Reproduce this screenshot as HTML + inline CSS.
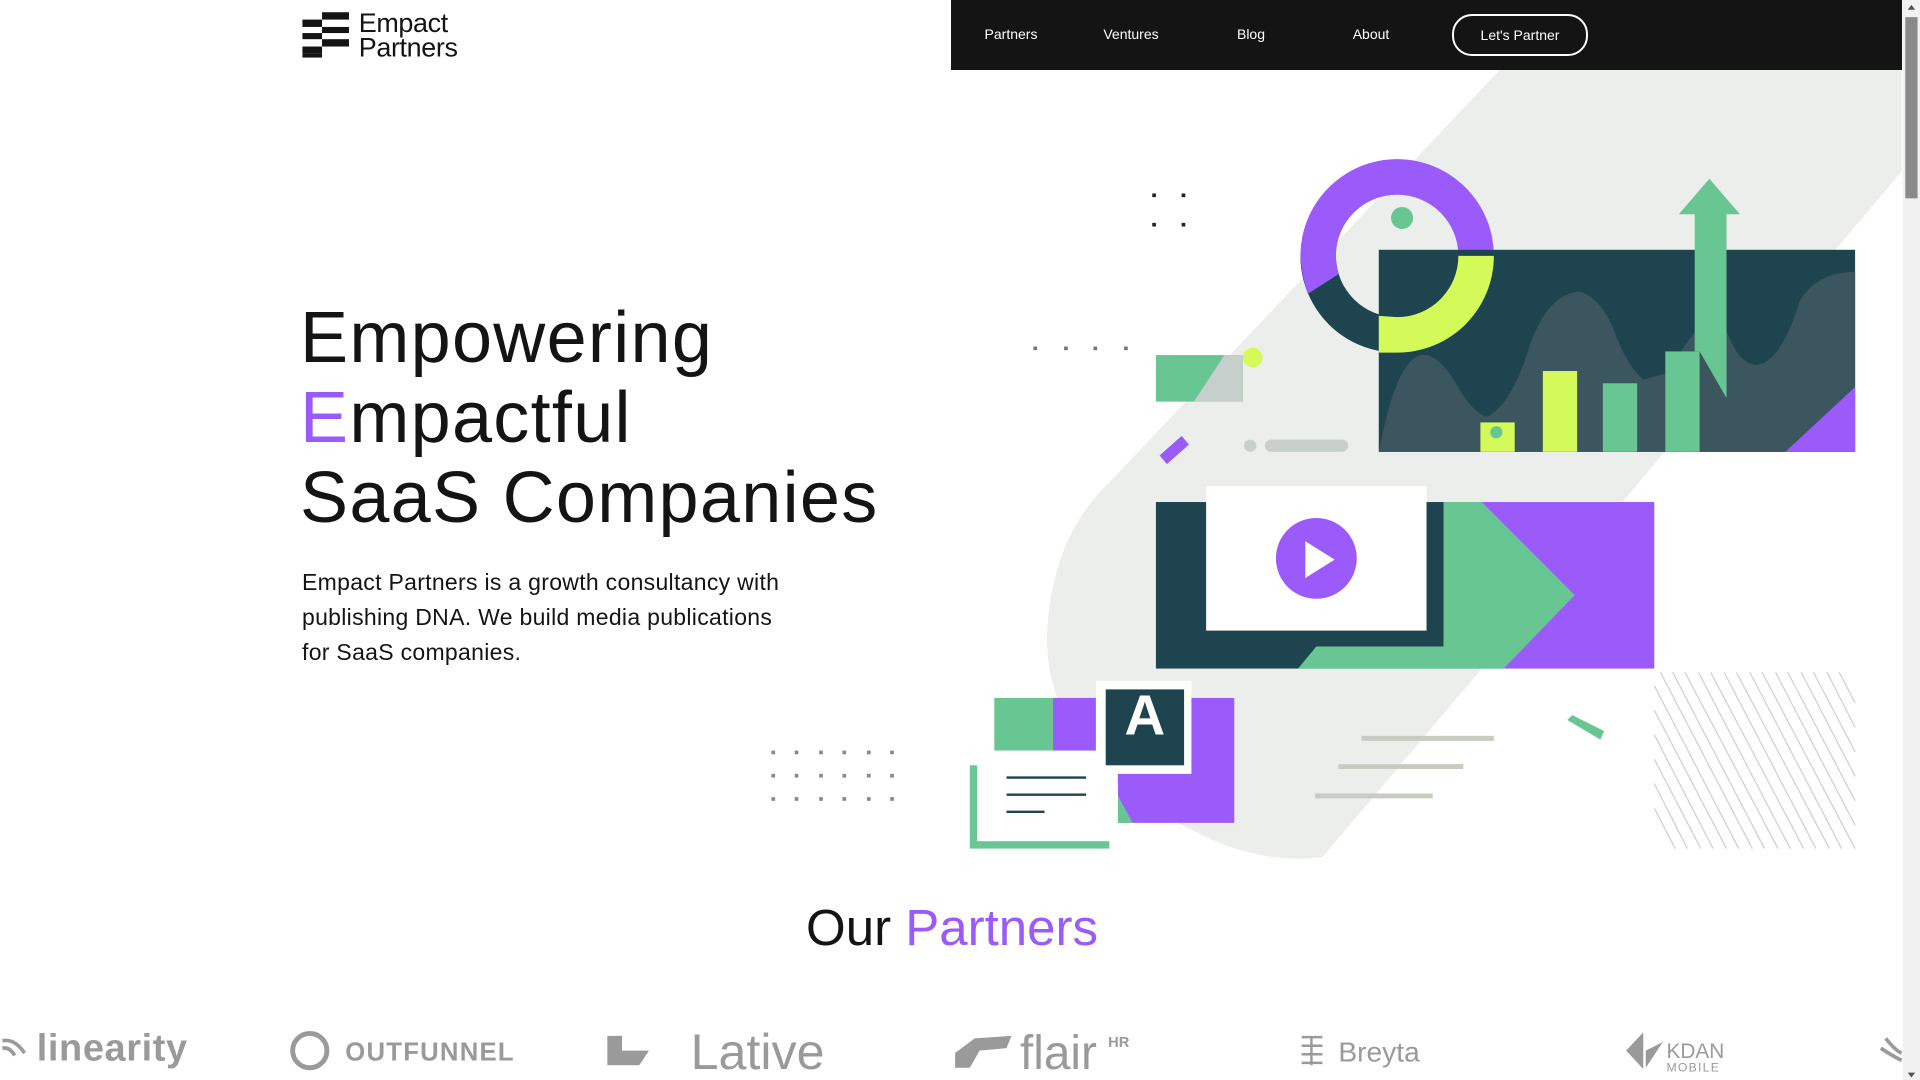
<!DOCTYPE html>
<html><head><meta charset="utf-8"><style>
html,body{margin:0;padding:0;width:1920px;height:1080px;overflow:hidden;background:#fff;font-family:"Liberation Sans",sans-serif;color:#111}
#g{position:absolute;left:0;top:0;width:1920px;height:1080px}
.nav{position:absolute;left:951px;top:0;width:951px;height:70px;background:#141414}
.nav a{position:absolute;top:26px;color:#fff;font-size:14px;text-decoration:none;transform:translateX(-50%)}
.btn{position:absolute;left:1452px;top:14px;width:132px;height:38px;border:2px solid #fff;border-radius:20px;color:#fff;font-size:14px;text-align:center;line-height:38px}
h1{position:absolute;left:300px;top:298px;margin:0;font-weight:normal;font-size:72px;line-height:80px;letter-spacing:1.3px;color:#141414}
p{position:absolute;left:302px;top:565px;margin:0;font-size:23px;line-height:35px;width:500px;letter-spacing:.3px;color:#141414}
.op{position:absolute;left:0;width:1904px;top:898px;text-align:center;font-size:51px;color:#141414}
.pu{color:#9b5bfb}
</style></head><body>
<svg id="g" viewBox="0 0 1568 882" xmlns="http://www.w3.org/2000/svg">
<g fill="#141414"><rect x="263" y="10" width="22" height="6"/><rect x="247" y="16" width="16" height="6"/><rect x="263" y="22" width="22" height="5"/><rect x="247" y="27" width="16" height="5"/><rect x="263" y="32" width="22" height="6"/><rect x="247" y="38" width="16" height="6"/><rect x="247" y="44" width="16" height="3"/></g>
<text x="293" y="26" font-family="Liberation Sans" font-size="22" fill="#141414" letter-spacing="-0.3">Empact</text>
<text x="293" y="46" font-family="Liberation Sans" font-size="22" fill="#141414" letter-spacing="-0.3">Partners</text>
<path d="M1225,57 L1553,57 L1553,140 L1080,700 Q1040,705 1000,690 Q855,630 855,520 Q858,440 905,395 Z" fill="#eceeeb"/>
<g fill="#222"><rect x="941" y="158" width="3" height="3"/><rect x="965" y="158" width="3" height="3"/><rect x="941" y="182" width="3" height="3"/><rect x="965" y="182" width="3" height="3"/></g>
<g fill="#777"><rect x="844" y="283" width="3" height="3"/><rect x="869" y="283" width="3" height="3"/><rect x="893" y="283" width="3" height="3"/><rect x="918" y="283" width="3" height="3"/></g>
<g fill="#888">
<rect x="630" y="613" width="3" height="3"/><rect x="649" y="613" width="3" height="3"/><rect x="669" y="613" width="3" height="3"/><rect x="688" y="613" width="3" height="3"/><rect x="708" y="613" width="3" height="3"/><rect x="727" y="613" width="3" height="3"/>
<rect x="630" y="632" width="3" height="3"/><rect x="649" y="632" width="3" height="3"/><rect x="669" y="632" width="3" height="3"/><rect x="688" y="632" width="3" height="3"/><rect x="708" y="632" width="3" height="3"/><rect x="727" y="632" width="3" height="3"/>
<rect x="630" y="651" width="3" height="3"/><rect x="649" y="651" width="3" height="3"/><rect x="669" y="651" width="3" height="3"/><rect x="688" y="651" width="3" height="3"/><rect x="708" y="651" width="3" height="3"/><rect x="727" y="651" width="3" height="3"/></g>
<path d="M1062,209 A79,79 0 0 1 1220,209 L1191,209 A50,50 0 0 0 1091,209 Z" fill="#9b5bfb"/>
<path d="M1062,209 A79,79 0 0 0 1141,288 L1141,259 A50,50 0 0 1 1091,209 Z" fill="#1e4450"/>
<path d="M1062,209 L1091,209 A50,50 0 0 0 1093,224 L1068,240 Q1063,225 1062,209Z" fill="#9b5bfb"/>
<rect x="1126" y="204" width="389" height="165" fill="#1e4450"/>
<path d="M1220,209 A79,79 0 0 1 1141,288 L1126,288 L1126,258 L1141,259 A50,50 0 0 0 1191,209 Z" fill="#d4fa5a"/>
<circle cx="1145" cy="178" r="9" fill="#68c692"/>
<path d="M1126,369 Q1140,295 1160,290 Q1175,288 1190,315 Q1205,340 1215,340 Q1235,330 1250,280 Q1265,240 1290,238 Q1310,245 1320,275 Q1330,300 1342,310 L1360,305 Q1370,290 1385,270 L1410,270 Q1420,298 1435,298 Q1455,295 1470,245 Q1485,222 1515,222 L1515,369 Z" fill="#3c5660"/>
<rect x="1209" y="345" width="28" height="24" fill="#d4fa5a"/><circle cx="1222" cy="353" r="5" fill="#68c692"/>
<rect x="1260" y="303" width="28" height="66" fill="#d4fa5a"/>
<rect x="1309" y="313" width="28" height="56" fill="#68c692"/>
<rect x="1360" y="287" width="28" height="82" fill="#68c692"/>
<path d="M1384,175 L1371,175 L1396,146 L1421,175 L1410,175 L1410,325 L1388,287 L1384,287 Z" fill="#68c692"/>
<path d="M1515,316 L1515,369 L1458,369 Z" fill="#9b5bfb"/>
<rect x="944" y="290" width="71" height="38" fill="#68c692"/>
<path d="M975,328 L1000,290 L1015,290 L1015,328 Z" fill="#c6cfcb"/>
<circle cx="1023" cy="292" r="8" fill="#d4fa5a"/>
<path d="M947,372 L965,356 L971,363 L953,379 Z" fill="#9b5bfb"/>
<circle cx="1021" cy="364" r="5" fill="#c7d0cc"/><rect x="1033" y="359" width="68" height="10" rx="5" fill="#c7d0cc"/>
<rect x="944" y="410" width="235" height="136" fill="#1e4450"/>
<rect x="1179" y="410" width="172" height="136" fill="#9b5bfb"/>
<path d="M1179,410 L1210,410 L1286,486 L1228,546 L1060,546 L1075,528 L1179,528 Z" fill="#68c692"/>
<rect x="985" y="397" width="180" height="118" fill="#fff"/>
<circle cx="1075" cy="456" r="33" fill="#9b5bfb"/>
<path d="M1066,442 L1090,457 L1066,472 Z" fill="#fff"/>
<g stroke="#cfcfcf" stroke-width="1">
<path d="M1351,560 L1420,693 M1351,580 L1410,693 M1351,600 L1399,693 M1351,620 L1389,693 M1351,640 L1378,693 M1351,660 L1368,693 M1356,549 L1431,693 M1366,549 L1441,693 M1376,549 L1452,693 M1387,549 L1462,693 M1397,549 L1473,693 M1408,549 L1483,693 M1418,549 L1494,693 M1429,549 L1504,693 M1439,549 L1515,693 M1450,549 L1515,674 M1460,549 L1515,654 M1471,549 L1515,634 M1481,549 L1515,614 M1492,549 L1515,594 M1502,549 L1515,574"/></g>
<g stroke="#c5cdc0" stroke-width="4"><path d="M1112,603 L1220,603 M1093,626 L1195,626 M1074,650 L1170,650"/></g>
<path d="M1280,588 L1284,584 L1310,597 L1307,604 Z" fill="#68c692"/>
<rect x="812" y="570" width="83" height="43" fill="#68c692"/>
<rect x="913" y="570" width="95" height="102" fill="#9b5bfb"/>
<path d="M913,650 L925,672 L913,672 Z" fill="#68c692"/>
<rect x="860" y="570" width="35" height="43" fill="#9b5bfb"/>
<rect x="792" y="625" width="114" height="68" fill="#68c692"/>
<rect x="798" y="613" width="114" height="74" fill="#fff"/>
<g stroke="#1e4450" stroke-width="2"><path d="M822,635 L887,635 M822,649 L887,649 M822,663 L853,663"/></g>
<rect x="895" y="556" width="78" height="76" fill="#fff"/>
<rect x="903" y="563" width="64" height="62" fill="#1e4450"/>
<text x="935" y="600" font-family="Liberation Sans" font-size="46" fill="#fff" text-anchor="middle" font-weight="bold">A</text>
<g font-family="Liberation Sans" fill="#9a9a9a">
<text x="30" y="866" font-size="31" font-weight="bold" letter-spacing="0.5">linearity</text>
<path d="M2,850 Q12,848 20,860 M2,856 Q8,855 12,862" stroke="#9a9a9a" stroke-width="3" fill="none"/>
<circle cx="253" cy="858" r="14" fill="none" stroke="#9a9a9a" stroke-width="4"/>
<text x="282" y="866" font-size="21" font-weight="bold" letter-spacing="1">OUTFUNNEL</text>
<path d="M496,846 L508,846 L508,858 L530,858 L522,870 L496,870 Z"/>
<text x="564" y="873" font-size="41">Lative</text>
<path d="M780,860 L796,848 L826,846 L822,856 L800,858 L792,872 L780,872 Z"/>
<text x="833" y="873" font-size="39">flair</text>
<text x="905" y="855" font-size="12" font-weight="bold">HR</text>
<g stroke="#9a9a9a" stroke-width="2"><path d="M1063,847 L1080,847 M1063,854 L1080,854 M1063,861 L1080,861 M1063,868 L1080,868 M1071,847 L1071,870"/></g>
<text x="1093" y="867" font-size="23">Breyta</text>
<path d="M1342,843 L1342,873 L1328,858 Z M1344,858 L1358,851 L1344,872Z"/>
<text x="1361" y="864" font-size="17">KDAN</text>
<text x="1361" y="875" font-size="10" letter-spacing="1">MOBILE</text>
<path d="M1540,848 Q1548,858 1553,860 M1536,856 Q1545,862 1553,866" stroke="#9a9a9a" stroke-width="3" fill="none"/>
</g>
<rect x="1554" y="0" width="14" height="882" fill="#f1f1f1"/>
<rect x="1556" y="14" width="10" height="148" fill="#8a8a8a"/>
<path d="M1558,876 L1564,876 L1561,880 Z" fill="#505050"/>
<path d="M1558,8 L1564,8 L1561,4 Z" fill="#505050"/>
</svg>
<div class="nav">
<a style="left:60px">Partners</a><a style="left:180px">Ventures</a><a style="left:300px">Blog</a><a style="left:420px">About</a>
</div>
<div class="btn">Let's Partner</div>
<h1>Empowering<br><span class="pu">E</span>mpactful<br>SaaS Companies</h1>
<p>Empact Partners is a growth consultancy with publishing DNA. We build media publications for SaaS companies.</p>
<div class="op">Our <span class="pu">Partners</span></div>
</body></html>
